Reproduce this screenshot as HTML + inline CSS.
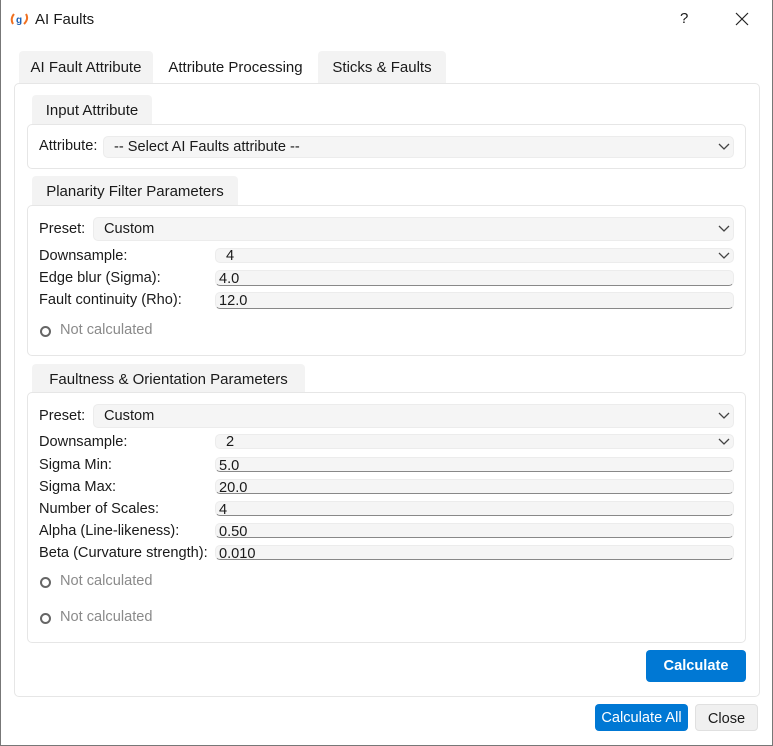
<!DOCTYPE html>
<html><head><style>
*{box-sizing:border-box;margin:0;padding:0}
body{width:773px;height:746px;background:#fff;font-family:"Liberation Sans",sans-serif;font-size:14.6px;color:#1a1a1a;position:relative;overflow:hidden}
.a{position:absolute}
.win{left:0;top:0;width:773px;height:746px;border:1px solid #777;border-top:none}
.tab{height:32px;line-height:34px;text-align:center;font-size:15px}
.gt{background:#f3f3f3;border-radius:4px 4px 0 0}
.box{border:1px solid #e6e6e6;border-radius:5px;background:#fff}
.cb{background:#f5f5f5;border:1px solid #ececec;border-radius:5px;padding-left:10px;line-height:21px}
.cb svg{position:absolute;right:3px;top:50%;margin-top:-4px}
.le{background:#f5f5f5;border:1px solid #ececec;border-bottom:1px solid #888;border-radius:5px;padding-left:3px;line-height:17px;font-size:14.6px}
.lb{font-size:14.6px}
.rad{width:11px;height:11px;border:2px solid #666;border-radius:50%}
.gray{color:#8a8a8a}
.btn{background:#0078d4;color:#fff;border-radius:4px;text-align:center}
</style></head><body>
<div class="a win"></div>
<svg class="a" style="left:10px;top:11px" width="20" height="16" viewBox="0 0 20 16"><path d="M4 3 Q0 8 3 13" stroke="#f07020" stroke-width="2" fill="none"/><path d="M16 3 Q19 8 14 13" stroke="#f07020" stroke-width="2" fill="none"/><text x="6" y="12" font-size="10" font-weight="bold" fill="#1a5fb4" font-family="Liberation Sans">g</text></svg>
<div class="a" style="left:35px;top:11px;font-size:15px">AI Faults</div>
<div class="a" style="left:680px;top:10px;font-size:15px">?</div>
<svg class="a" style="left:735px;top:12px" width="14" height="14"><path d="M1 1L13 13M13 1L1 13" stroke="#222" stroke-width="1.2"/></svg>
<div class="a tab gt" style="left:19px;top:51px;width:134px">AI Fault Attribute</div>
<div class="a tab" style="left:153px;top:51px;width:165px">Attribute Processing</div>
<div class="a tab gt" style="left:318px;top:51px;width:128px">Sticks &amp; Faults</div>
<div class="a box" style="left:14px;top:83px;width:746px;height:614px"></div>
<div class="a tab gt" style="left:32px;top:95px;width:120px;height:30px;line-height:32px">Input Attribute</div>
<div class="a box" style="left:27px;top:124px;width:719px;height:45px"></div>
<div class="a lb" style="left:39px;top:138px">Attribute:</div>
<div class="a cb" style="left:103px;top:136px;width:631px;height:22px">-- Select AI Faults attribute --<svg width="12" height="8"><path d="M1 1L6 6L11 1" stroke="#444" fill="none" stroke-width="1.3"/></svg></div>
<div class="a tab gt" style="left:32px;top:176px;width:206px;height:30px;line-height:32px">Planarity Filter Parameters</div>
<div class="a box" style="left:27px;top:205px;width:719px;height:151px"></div>
<div class="a lb" style="left:39px;top:221px">Preset:</div>
<div class="a cb" style="left:93px;top:217px;width:641px;height:24px;line-height:23px">Custom<svg width="12" height="8"><path d="M1 1L6 6L11 1" stroke="#444" fill="none" stroke-width="1.3"/></svg></div>
<div class="a lb" style="left:39px;top:248px">Downsample:</div>
<div class="a cb" style="left:215px;top:248px;width:519px;height:15px;line-height:14px">4<svg width="12" height="8"><path d="M1 1L6 6L11 1" stroke="#444" fill="none" stroke-width="1.3"/></svg></div>
<div class="a lb" style="left:39px;top:270px">Edge blur (Sigma):</div>
<div class="a le" style="left:215px;top:270px;width:519px;height:16px">4.0</div>
<div class="a lb" style="left:39px;top:292px">Fault continuity (Rho):</div>
<div class="a le" style="left:215px;top:292px;width:519px;height:17px">12.0</div>
<div class="a rad" style="left:40px;top:326px"></div>
<div class="a gray" style="left:60px;top:322px">Not calculated</div>
<div class="a tab gt" style="left:32px;top:364px;width:273px;height:29px;line-height:31px">Faultness &amp; Orientation Parameters</div>
<div class="a box" style="left:27px;top:392px;width:719px;height:251px"></div>
<div class="a lb" style="left:39px;top:408px">Preset:</div>
<div class="a cb" style="left:93px;top:404px;width:641px;height:24px;line-height:23px">Custom<svg width="12" height="8"><path d="M1 1L6 6L11 1" stroke="#444" fill="none" stroke-width="1.3"/></svg></div>
<div class="a lb" style="left:39px;top:434px">Downsample:</div>
<div class="a cb" style="left:215px;top:434px;width:519px;height:15px;line-height:14px">2<svg width="12" height="8"><path d="M1 1L6 6L11 1" stroke="#444" fill="none" stroke-width="1.3"/></svg></div>
<div class="a lb" style="left:39px;top:457px">Sigma Min:</div>
<div class="a le" style="left:215px;top:457px;width:519px;height:15px">5.0</div>
<div class="a lb" style="left:39px;top:479px">Sigma Max:</div>
<div class="a le" style="left:215px;top:479px;width:519px;height:15px">20.0</div>
<div class="a lb" style="left:39px;top:501px">Number of Scales:</div>
<div class="a le" style="left:215px;top:501px;width:519px;height:15px">4</div>
<div class="a lb" style="left:39px;top:523px">Alpha (Line-likeness):</div>
<div class="a le" style="left:215px;top:523px;width:519px;height:15px">0.50</div>
<div class="a lb" style="left:39px;top:545px">Beta (Curvature strength):</div>
<div class="a le" style="left:215px;top:545px;width:519px;height:15px">0.010</div>
<div class="a rad" style="left:40px;top:577px"></div>
<div class="a gray" style="left:60px;top:573px">Not calculated</div>
<div class="a rad" style="left:40px;top:613px"></div>
<div class="a gray" style="left:60px;top:609px">Not calculated</div>
<div class="a btn" style="left:646px;top:650px;width:100px;height:32px;line-height:32px;font-weight:bold;font-size:14.6px">Calculate</div>
<div class="a btn" style="left:595px;top:704px;width:93px;height:27px;line-height:28px">Calculate All</div>
<div class="a" style="left:695px;top:704px;width:63px;height:27px;line-height:28px;text-align:center;background:#f0f0f0;border:1px solid #e0e0e0;border-radius:4px">Close</div>
</body></html>
